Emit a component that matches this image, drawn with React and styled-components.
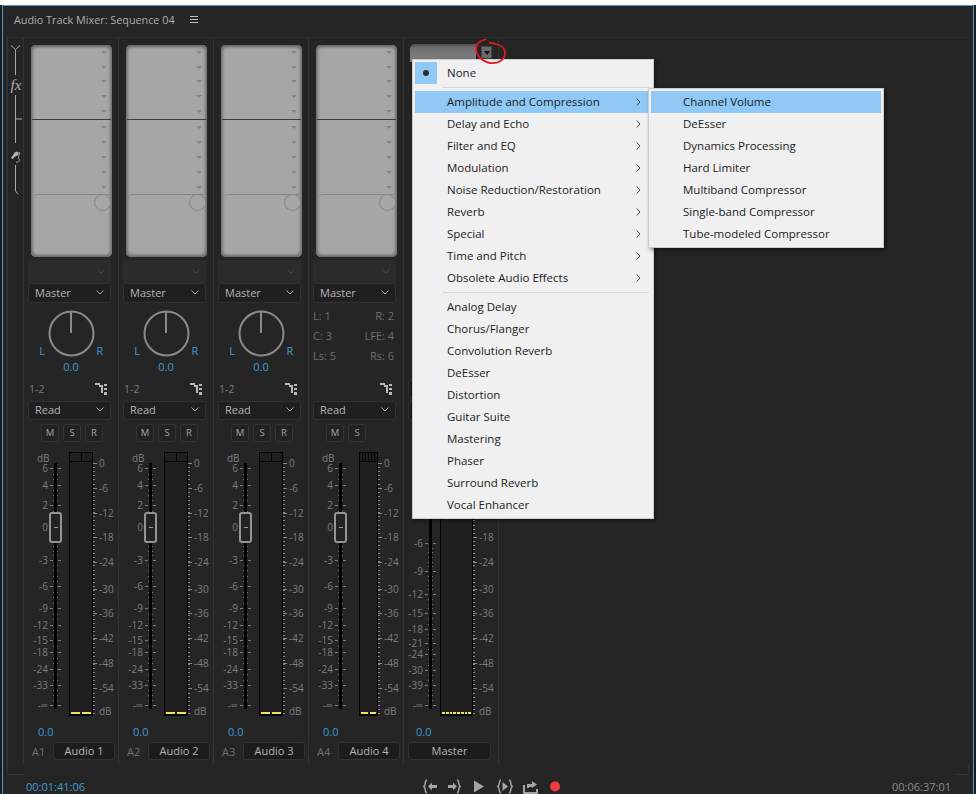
import React from "react";
import styled, { createGlobalStyle } from "styled-components";

const GlobalStyle = createGlobalStyle`
  html, body {
    margin: 0;
    padding: 0;
    background: #1b1b1b;
  }
  * {
    box-sizing: border-box;
  }
`;

const TOP = 447;

const Page = styled.div`
  position: relative;
  width: 976px;
  height: 794px;
  overflow: hidden;
  font-family: "Open Sans", "Liberation Sans", sans-serif;
  background: #1b1b1b;
`;

const TopEdge = styled.div`
  height: 5px;
  background: #fff;
`;

const Frame = styled.div`
  height: 789px;
  margin: 0 2px;
  background: #252525;
  border: 1px solid #4a9cc4;
  border-bottom: 0;
  display: flex;
  flex-direction: column;
`;

const Header = styled.div`
  height: 31px;
  display: flex;
  align-items: center;
  padding: 0 0 4px 11px;
  font-size: 10.8px;
  color: #adadad;
`;

const MenuLines = styled.div`
  width: 8px;
  height: 7px;
  margin-left: 15px;
  border-top: 1px solid #bbb;
  border-bottom: 1px solid #bbb;
  position: relative;
  &::after {
    content: "";
    position: absolute;
    left: 0;
    right: 0;
    top: 2px;
    height: 1px;
    background: #bbb;
  }
`;

const MixerArea = styled.div`
  position: relative;
  height: 738px;
  margin: 0 4px 0 4px;
  display: flex;
  align-items: flex-start;
  border-top: 1px solid #2f2f2f;
  border-left: 1px solid #363636;
  &::before {
    content: "";
    position: absolute;
    left: 0;
    bottom: 0;
    width: 16px;
    height: 1px;
    background: #363636;
  }
  &::after {
    content: "";
    position: absolute;
    right: 0;
    bottom: 0;
    width: 11px;
    height: 11px;
    border-right: 1px solid #363636;
    border-bottom: 1px solid #363636;
  }
`;

const AutoColumn = styled.div`
  width: 16px;
  height: 726px;
  border-right: 1px solid #333;
  flex: none;
`;

const Strip = styled.div`
  width: 95px;
  height: 726px;
  flex: none;
  border-right: 1px solid #333;
  display: flex;
  flex-direction: column;
`;

const Rack = styled.div`
  width: 81px;
  height: 212px;
  margin: 7px 0 0 7px;
  flex: none;
  display: flex;
  flex-direction: column;
  background: #a6a6a6;
  border-radius: 5px;
  box-shadow: inset 0 2px 3px #666, inset 0 -2px 3px #6e6e6e, inset 2px 0 3px #858585, inset -2px 0 3px #858585;
`;

const SlotGroup = styled.div`
  height: 75px;
  flex: none;
  display: flex;
  flex-direction: column;
  align-items: flex-end;
  padding-right: 4px;
  margin: 0 1px;
  border-bottom: ${(props) => (props.$line ? "1px solid #3c3c3c" : "0")};
`;

const Slot = styled.div`
  height: 15px;
  display: flex;
  align-items: center;
  &::after {
    content: "";
    border-left: 3px solid transparent;
    border-right: 3px solid transparent;
    border-top: 3px solid #858585;
  }
`;

const SendPanel = styled.div`
  flex: 1;
  margin: -1px 1px 0 2px;
  display: flex;
  justify-content: flex-end;
  align-items: flex-start;
  border-top: 1px solid #888;
  border-top-left-radius: 5px;
`;

const SendKnob = styled.div`
  width: 17px;
  height: 17px;
  margin-top: -1px;
  border-radius: 50%;
  border: 1px solid #858585;
  background: #a6a6a6;
`;

const MasterRack = styled.div`
  height: 259px;
  margin: 6px 0 0 6px;
  flex: none;
  display: flex;
  align-items: flex-start;
`;

const MasterSlot = styled.div`
  width: 66px;
  height: 18px;
  border-radius: 5px 0 0 0;
  background: linear-gradient(#4f4f4f 0, #707070 4px, #7e7e7e 16px);
`;

const ArrowButton = styled.div`
  width: 11px;
  height: 13px;
  margin: 2px 0 0 5px;
  display: flex;
  align-items: center;
  justify-content: center;
  background: #6a6a6a;
  border: 1px solid #444;
  &::after {
    content: "";
    border-left: 3px solid transparent;
    border-right: 3px solid transparent;
    border-top: 4px solid #111;
  }
`;

const SendSelect = styled.div`
  width: 83px;
  height: 23px;
  margin: 3px 0 0 4px;
  flex: none;
  display: flex;
  align-items: center;
  justify-content: flex-end;
  padding-right: 6px;
  background: #2b2b2b;
`;

const Select = styled.div`
  width: 83px;
  height: ${(props) => props.$h || 19}px;
  margin-left: 4px;
  flex: none;
  display: flex;
  align-items: center;
  justify-content: space-between;
  padding: 0 6px 1px 6px;
  background: #1f1f1f;
  border: 1px solid #313131;
  border-radius: 3px;
  font-size: 11px;
  color: #b4b4b4;
`;

const PanArea = styled.div`
  height: 77px;
  flex: none;
  display: flex;
  flex-direction: column;
  align-items: center;
  padding-top: 7px;
`;

const KnobRow = styled.div`
  display: flex;
  align-items: flex-end;
  gap: 1px;
`;

const PanSide = styled.span`
  width: 9px;
  font-size: 11px;
  line-height: 12px;
  color: #3f9bd8;
  text-align: center;
`;

const BlueValue = styled.div`
  font-size: 11px;
  line-height: 14px;
  color: #3f9bd8;
`;

const PanValue = styled(BlueValue)`
  margin-top: 3px;
`;

const SurroundGrid = styled.div`
  height: 77px;
  flex: none;
  display: grid;
  grid-template-columns: 1fr auto;
  grid-auto-rows: 20px;
  align-items: center;
  padding: 2px 9px 0 4px;
  font-size: 11px;
  color: #6f6f6f;
  & > span:nth-child(even) {
    justify-self: end;
  }
`;

const ChannelRow = styled.div`
  height: 18px;
  flex: none;
  display: flex;
  align-items: center;
  justify-content: space-between;
  padding: 0 10px 1px 5px;
  font-size: 10.5px;
  color: #7d7d7d;
`;

const AutoSelect = styled(Select)`
  margin-top: 3px;
  padding-bottom: 2px;
`;

const MsrRow = styled.div`
  height: 18px;
  margin-top: 4px;
  flex: none;
  display: flex;
  gap: 4px;
  padding-left: 17px;
`;

const MsrButton = styled.div`
  width: 18px;
  height: 18px;
  display: flex;
  align-items: center;
  justify-content: center;
  padding-bottom: 1px;
  background: #222;
  border: 1px solid #343434;
  border-radius: 3px;
  font-size: 9.5px;
  color: #a2a2a2;
`;

const MeterArea = styled.div`
  position: relative;
  height: 274px;
  margin-top: 6px;
  flex: none;
`;

const ScaleDrawing = styled.svg`
  position: absolute;
  left: 0;
  top: 0;
`;

const ScaleLabel = styled.span.attrs((props) => ({
  style: { top: props.$y - TOP - 7 },
}))`
  position: absolute;
  height: 14px;
  line-height: 14px;
  font-size: 10px;
  color: #7e7e7e;
  white-space: nowrap;
`;

const LeftLabel = styled(ScaleLabel)`
  left: ${(props) => props.$shift}px;
  width: 24px;
  text-align: right;
`;

const RightLabel = styled(ScaleLabel)`
  left: 75px;
`;

const DbCaption = styled(ScaleLabel)`
  left: 13px;
`;

const FaderHandle = styled.div`
  position: absolute;
  left: 25px;
  top: 64px;
  width: 13px;
  height: 31px;
  display: flex;
  align-items: center;
  justify-content: center;
  background: #232323;
  border: 2px solid #949494;
  border-radius: 3px;
  &::after {
    content: "";
    width: 4px;
    height: 1px;
    background: #999;
  }
`;

const Meter = styled.div`
  position: absolute;
  left: ${(props) => 69 - props.$w}px;
  top: 4px;
  width: ${(props) => props.$w}px;
  height: 264px;
  display: flex;
  flex-direction: column;
  justify-content: space-between;
  background: #1f1f1f;
  border: 1px solid #000;
  border-bottom-width: 2px;
`;

const PeakRow = styled.div`
  height: 9px;
  display: flex;
  border-bottom: 1px solid #000;
`;

const PeakCell = styled.div`
  flex: 1;
  & + & {
    border-left: 1px solid #000;
  }
`;

const LevelRow = styled.div`
  height: 2px;
  display: flex;
  gap: ${(props) => (props.$dashed ? 1 : 2)}px;
  padding: 0 1px;
`;

const LevelDash = styled.div`
  flex: 1;
  background: #ebe25a;
`;

const ValueRow = styled(BlueValue)`
  height: 20px;
  flex: none;
  display: flex;
  align-items: center;
  padding-left: ${(props) => props.$left}px;
`;

const Footer = styled.div`
  height: 18px;
  flex: none;
  display: flex;
  align-items: center;
  justify-content: space-between;
  padding: 0 3px 0 8px;
  font-size: 11px;
  color: #707070;
`;

const NameButton = styled.div`
  width: ${(props) => props.$w}px;
  height: 18px;
  display: flex;
  align-items: center;
  justify-content: center;
  padding-bottom: 1px;
  background: #1c1c1c;
  border: 1px solid #323232;
  border-radius: 3px;
  font-size: 11px;
  color: #b4b4b4;
`;

const MasterFooter = styled(Footer)`
  padding: 0 0 0 4px;
  justify-content: flex-start;
`;

const TransportBar = styled.div`
  flex: 1;
  display: flex;
  align-items: center;
  justify-content: space-between;
  padding: 3px 22px 0 23px;
  font-size: 11px;
`;

const TimeCode = styled.span`
  color: ${(props) => props.$color};
`;

const Controls = styled.div`
  display: flex;
  align-items: center;
  margin-left: 5px;
`;

const Icon = styled.svg`
  display: block;
  margin-left: ${(props) => props.$gap || 0}px;
`;

const Menu = styled.div`
  position: absolute;
  left: 412px;
  top: 59px;
  width: 242px;
  height: 460px;
  padding: 2px 1px 2px 2px;
  background: #f0f0f0;
  border: 1px solid #cdcdcd;
  box-shadow: 2px 2px 4px rgba(0, 0, 0, 0.45);
  font-size: 11.5px;
  color: #1c1c1c;
`;

const MenuItem = styled.div`
  height: 22px;
  display: flex;
  align-items: center;
  justify-content: space-between;
  padding: 0 11px 1px 32px;
  background: ${(props) => (props.$active ? "#90c8f6" : "transparent")};
`;

const NoneItem = styled.div`
  height: 22px;
  display: flex;
  align-items: center;
`;

const NoneLabel = styled.span`
  margin-top: -1px;
`;

const CheckBox = styled.div`
  width: 22px;
  height: 22px;
  margin-right: 10px;
  display: flex;
  align-items: center;
  justify-content: center;
  background: #90c8f6;
  &::after {
    content: "";
    width: 6px;
    height: 6px;
    border-radius: 50%;
    background: #2b2b2b;
  }
`;

const Separator = styled.div`
  height: 7px;
  margin: 0 3px 0 28px;
  padding-top: 3px;
  &::after {
    content: "";
    display: block;
    height: 1px;
    background: #d6d6d6;
  }
`;

const SubMenu = styled.div`
  position: absolute;
  left: 235px;
  top: 28px;
  width: 236px;
  padding: 2px;
  background: #f0f0f0;
  border: 1px solid #cdcdcd;
  box-shadow: 2px 2px 4px rgba(0, 0, 0, 0.45);
`;

const Scribble = styled.svg`
  position: absolute;
  left: 473px;
  top: 37px;
`;

const Chevron = ({ color = "#a8a8a8" }) => (
  <svg width="8" height="5" viewBox="0 0 8 5">
    <polyline points="0.5,0.5 4,4 7.5,0.5" fill="none" stroke={color} strokeWidth="1" />
  </svg>
);

const MenuArrow = () => (
  <svg width="5" height="8" viewBox="0 0 5 8">
    <polyline points="0.7,0.5 4,4 0.7,7.5" fill="none" stroke="#444" strokeWidth="1" />
  </svg>
);

const Knob = () => (
  <svg width="47" height="47" viewBox="0 0 47 47">
    <circle cx="23.5" cy="23.5" r="22" fill="none" stroke="#8a8a8a" strokeWidth="2" />
    <line x1="23" y1="1" x2="23" y2="23" stroke="#8a8a8a" strokeWidth="2" />
  </svg>
);

const RouteIcon = () => (
  <svg width="13" height="12" viewBox="0 0 13 12" shapeRendering="crispEdges" fill="#b8b8b8">
    <path d="M0 0h5v2h3v8H6V4H4V2H0z" />
    <rect x="9" y="1" width="3" height="2" />
    <rect x="9" y="5" width="3" height="2" />
    <rect x="9" y="9" width="3" height="3" />
  </svg>
);

const leftScale = [
  ["6", 467], ["4", 484], ["2", 504], ["0", 526], ["-3", 559], ["-6", 585], ["-9", 607],
  ["-12", 624], ["-15", 639], ["-18", 651], ["-24", 668], ["-33", 684], ["-∞", 704],
];

const masterScale = [
  ["-6", 542], ["-9", 570], ["-12", 593], ["-15", 612], ["-18", 628], ["-21", 642],
  ["-24", 653], ["-30", 669], ["-39", 684], ["-∞", 704],
];

const rightScale = [
  ["0", 462], ["-6", 487], ["-12", 512], ["-18", 536], ["-24", 561],
  ["-30", 588], ["-36", 612], ["-42", 637], ["-48", 662], ["-54", 687],
];

const Scale = ({ labels, shift }) => {
  const ticks = labels.map(([, y]) => y - TOP);
  const dots = [];
  ticks.forEach((y, i) => {
    const next = ticks[i + 1];
    if (next === undefined) return;
    const count = Math.max(1, Math.round((next - y) / 5));
    for (let n = 1; n < count; n++) dots.push(y + ((next - y) * n) / count);
  });
  const right = [];
  for (let y = 15; y < 268; y += 4.1) right.push(Math.round(y));
  return (
    <ScaleDrawing width="95" height="274" viewBox="0 0 95 274" shapeRendering="crispEdges">
      <rect x={30 + shift} y="15" width="3" height="246" fill="#000" />
      {ticks.map((y) => (
        <g key={y} fill="#7d7d7d">
          <rect x={26 + shift} y={y} width="3" height="1" />
          <rect x={34 + shift} y={y} width="3" height="1" />
        </g>
      ))}
      {dots.map((y) => (
        <g key={y} fill="#6f6f6f">
          <rect x={29 + shift} y={Math.round(y)} width="1" height="1" />
          <rect x={33 + shift} y={Math.round(y)} width="1" height="1" />
        </g>
      ))}
      {right.map((y) => (
        <rect key={y} x="69" y={y} width="2" height="1" fill="#8a8a8a" />
      ))}
      {rightScale.map(([, y]) => (
        <rect key={y} x="69" y={y - TOP} width="4" height="1" fill="#8a8a8a" />
      ))}
    </ScaleDrawing>
  );
};

const RightLabels = ({ from = 0 }) => (
  <>
    {rightScale
      .filter(([, y]) => y >= from)
      .map(([text, y]) => (
        <RightLabel key={text} $y={y}>
          {text}
        </RightLabel>
      ))}
    <RightLabel $y={710}>dB</RightLabel>
  </>
);

const TrackStrip = ({ id, name, surround }) => (
  <Strip>
    <Rack>
      <SlotGroup $line>
        {[0, 1, 2, 3, 4].map((i) => (
          <Slot key={i} />
        ))}
      </SlotGroup>
      <SlotGroup>
        {[0, 1, 2, 3, 4].map((i) => (
          <Slot key={i} />
        ))}
      </SlotGroup>
      <SendPanel>
        <SendKnob />
      </SendPanel>
    </Rack>
    <SendSelect>
      <Chevron color="#444" />
    </SendSelect>
    <Select $h={20}>
      Master
      <Chevron />
    </Select>
    {surround ? (
      <SurroundGrid>
        <span>L: 1</span>
        <span>R: 2</span>
        <span>C: 3</span>
        <span>LFE: 4</span>
        <span>Ls: 5</span>
        <span>Rs: 6</span>
      </SurroundGrid>
    ) : (
      <PanArea>
        <KnobRow>
          <PanSide>L</PanSide>
          <Knob />
          <PanSide>R</PanSide>
        </KnobRow>
        <PanValue>0.0</PanValue>
      </PanArea>
    )}
    <ChannelRow>
      <span>{surround ? "" : "1-2"}</span>
      <RouteIcon />
    </ChannelRow>
    <AutoSelect>
      Read
      <Chevron />
    </AutoSelect>
    <MsrRow>
      <MsrButton>M</MsrButton>
      <MsrButton>S</MsrButton>
      {!surround && <MsrButton>R</MsrButton>}
    </MsrRow>
    <MeterArea>
      <Scale labels={leftScale} shift={0} />
      <DbCaption $y={457}>dB</DbCaption>
      {leftScale.map(([text, y]) => (
        <LeftLabel key={text} $y={y} $shift={0}>
          {text}
        </LeftLabel>
      ))}
      <RightLabels />
      <Meter $w={surround ? 19 : 24}>
        <PeakRow>
          {Array.from({ length: surround ? 6 : 2 }, (_, i) => (
            <PeakCell key={i} />
          ))}
        </PeakRow>
        <LevelRow>
          <LevelDash />
          <LevelDash />
        </LevelRow>
      </Meter>
      <FaderHandle />
    </MeterArea>
    <ValueRow $left={14}>0.0</ValueRow>
    <Footer>
      {id}
      <NameButton $w={62}>{name}</NameButton>
    </Footer>
  </Strip>
);

// most of the master strip sits under the open menu, only its edges show
const MasterStrip = () => (
  <Strip>
    <MasterRack>
      <MasterSlot />
      <ArrowButton />
    </MasterRack>
    <PanArea />
    <Select $h={18} />
    <AutoSelect />
    <MsrRow />
    <MeterArea>
      <Scale labels={masterScale} shift={-5} />
      {masterScale.map(([text, y]) => (
        <LeftLabel key={text} $y={y} $shift={-5}>
          {text}
        </LeftLabel>
      ))}
      <RightLabels from={520} />
      <Meter $w={33}>
        <PeakRow />
        <LevelRow $dashed>
          {[0, 1, 2, 3, 4, 5, 6, 7].map((i) => (
            <LevelDash key={i} />
          ))}
        </LevelRow>
      </Meter>
    </MeterArea>
    <ValueRow $left={12}>0.0</ValueRow>
    <MasterFooter>
      <NameButton $w={83}>Master</NameButton>
    </MasterFooter>
  </Strip>
);

const AutomationRail = () => (
  <svg width="15" height="170" viewBox="0 0 15 170" fill="none" stroke="#a8a8a8">
    <path d="M3 7.5 L7.5 11.5 L12 7.5 M7.5 11.5 V37 M7.5 57 V81 M7.5 81 H14 M7.5 81 V105 M7.5 127 V153 L10 156" />
    <text x="2.5" y="52" fontFamily="Liberation Serif, serif" fontStyle="italic" fontSize="15" fill="#b4b4b4" stroke="none">
      fx
    </text>
    <path d="M3 120 L6 115.5 C7 113.5 9.5 113 10.5 114.5 C11.5 116 10 117.5 8 118 L4.5 121 Z" fill="#b4b4b4" stroke="none" />
    <path d="M11 114 C13 116 9 119 11 121 C12.5 122.5 10 125 8 124" strokeWidth="1" />
  </svg>
);

const menuGroups = [
  "Delay and Echo",
  "Filter and EQ",
  "Modulation",
  "Noise Reduction/Restoration",
  "Reverb",
  "Special",
  "Time and Pitch",
  "Obsolete Audio Effects",
];

const menuPlain = [
  "Analog Delay",
  "Chorus/Flanger",
  "Convolution Reverb",
  "DeEsser",
  "Distortion",
  "Guitar Suite",
  "Mastering",
  "Phaser",
  "Surround Reverb",
  "Vocal Enhancer",
];

const subItems = [
  "DeEsser",
  "Dynamics Processing",
  "Hard Limiter",
  "Multiband Compressor",
  "Single-band Compressor",
  "Tube-modeled Compressor",
];

const TransportIcon = ({ children, width, gap }) => (
  <Icon $gap={gap} width={width} height="15" viewBox={`0 0 ${width} 15`} fill="#a4a4a4">
    {children}
  </Icon>
);

const Brace = ({ d }) => <path d={d} fill="none" stroke="#a4a4a4" strokeWidth="1.5" />;

const App = () => (
  <Page>
    <GlobalStyle />
    <TopEdge />
    <Frame>
      <Header>
        Audio Track Mixer: Sequence 04
        <MenuLines />
      </Header>
      <MixerArea>
        <AutoColumn>
          <AutomationRail />
        </AutoColumn>
        <TrackStrip id="A1" name="Audio 1" />
        <TrackStrip id="A2" name="Audio 2" />
        <TrackStrip id="A3" name="Audio 3" />
        <TrackStrip id="A4" name="Audio 4" surround />
        <MasterStrip />
      </MixerArea>
      <TransportBar>
        <TimeCode $color="#3f9bd8">00:01:41:06</TimeCode>
        <Controls>
          <TransportIcon width={14}>
            <Brace d="M4 1 C1.5 1 3 6.5 0.8 7.5 C3 8.5 1.5 14 4 14" />
            <path d="M5 7.5 L9 3.5 V6 H14 V9 H9 V11.5 Z" />
          </TransportIcon>
          <TransportIcon width={13} gap={11}>
            <path d="M9 7.5 L5 3.5 V6 H0 V9 H5 V11.5 Z" />
            <Brace d="M9 1 C11.5 1 10 6.5 12.2 7.5 C10 8.5 11.5 14 9 14" />
          </TransportIcon>
          <TransportIcon width={10} gap={13}>
            <path d="M0 1.5 L10 7.5 L0 13.5 Z" />
          </TransportIcon>
          <TransportIcon width={16} gap={13}>
            <Brace d="M4 1 C1.5 1 3 6.5 0.8 7.5 C3 8.5 1.5 14 4 14" />
            <path d="M5.5 3 L11 7.5 L5.5 12 Z" />
            <Brace d="M12 1 C14.5 1 13 6.5 15.2 7.5 C13 8.5 14.5 14 12 14" />
          </TransportIcon>
          <TransportIcon width={15} gap={10}>
            <path d="M1 6 V14 H14 V10" fill="none" stroke="#a4a4a4" strokeWidth="2" />
            <path d="M4 9 V5 H9 V2 L14 5.5 L9 9 V8 H6 V9 Z" />
          </TransportIcon>
          <TransportIcon width={10} gap={12}>
            <circle cx="5" cy="7.5" r="5" fill="#ef3b3b" />
          </TransportIcon>
        </Controls>
        <TimeCode $color="#8c8c8c">00:06:37:01</TimeCode>
      </TransportBar>
    </Frame>
    <Menu>
      <NoneItem>
        <CheckBox />
        <NoneLabel>None</NoneLabel>
      </NoneItem>
      <Separator />
      <MenuItem $active>
        Amplitude and Compression
        <MenuArrow />
      </MenuItem>
      {menuGroups.map((item) => (
        <MenuItem key={item}>
          {item}
          <MenuArrow />
        </MenuItem>
      ))}
      <Separator />
      {menuPlain.map((item) => (
        <MenuItem key={item}>{item}</MenuItem>
      ))}
      <SubMenu>
        <MenuItem $active>Channel Volume</MenuItem>
        {subItems.map((item) => (
          <MenuItem key={item}>{item}</MenuItem>
        ))}
      </SubMenu>
    </Menu>
    <Scribble width="36" height="30" viewBox="0 0 36 30" fill="none" stroke="#e01a24" strokeWidth="1.8">
      <path d="M13 2 C8 4 3 6 3 11 C3 18 8 24 17 26 C25 27 32 23 32 16 C32 11 27 8 23 7 C20 6 18 6 16 6" />
    </Scribble>
  </Page>
);

export default App;
